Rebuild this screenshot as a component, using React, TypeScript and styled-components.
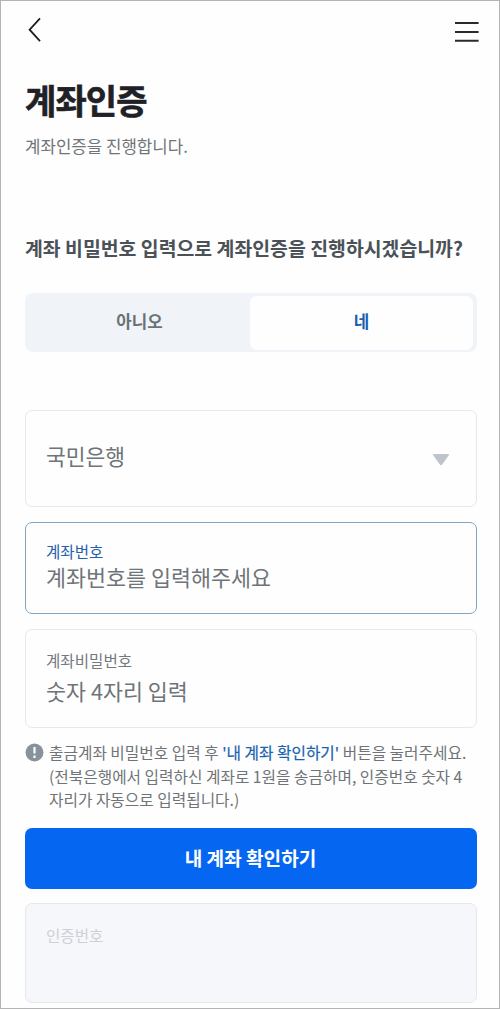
import React from 'react';
import styled, { createGlobalStyle } from 'styled-components';

const GlobalStyle = createGlobalStyle`
  *, *::before, *::after { box-sizing: border-box; }
  body {
    margin: 0;
    background: #fff;
    font-family: "Noto Sans CJK KR", "Noto Sans", sans-serif;
  }
  button { font-family: inherit; }
`;

const Page = styled.main`
  width: 500px;
  height: 1009px;
  padding: 0 22px 0 24px;
  border: 1px solid #b4b4b4;
  background: #fefefe;
  overflow: hidden;
`;

const TopBar = styled.header`
  display: flex;
  justify-content: space-between;
  align-items: flex-start;
  height: 60px;
  padding: 15px 0 0;
`;

const IconButton = styled.button<{ $shift?: number }>`
  display: flex;
  padding: 0;
  margin-right: ${({ $shift = 0 }) => $shift}px;
  border: 0;
  background: none;
`;

const Title = styled.h1`
  margin: 14px 0 0;
  font-size: 34px;
  font-weight: 700;
  line-height: 50px;
  letter-spacing: -0.9px;
  color: #1f2126;
  -webkit-text-stroke: 0.6px #1f2126;
`;

const Subtitle = styled.p`
  margin: 9px 0 0;
  font-size: 16.8px;
  line-height: 24px;
  color: #6f7478;
`;

const Question = styled.h2`
  margin: 75px 0 0;
  font-size: 19.4px;
  font-weight: 700;
  line-height: 30px;
  white-space: nowrap;
  color: #4b5257;
`;

const Segmented = styled.div`
  display: flex;
  height: 59px;
  margin-top: 30px;
  padding: 3px 4px 2px 0;
  border-radius: 8px;
  background: #f0f4f8;
`;

const Segment = styled.button<{ $active?: boolean }>`
  flex: ${({ $active }) => ($active ? '0 0 223px' : '1')};
  padding: ${({ $active }) => ($active ? '0 0 4px' : '0 0 4px 4px')};
  border: 0;
  border-radius: 7px;
  background: ${({ $active }) => ($active ? '#fefefe' : 'transparent')};
  color: ${({ $active }) => ($active ? '#1a5fb4' : '#6b7176')};
  font-size: 16.8px;
  font-weight: 700;
`;

const Field = styled.div<{ $height: number; $top?: number; $tone?: 'focus' | 'disabled' }>`
  display: flex;
  flex-direction: column;
  height: ${({ $height }) => $height}px;
  margin-top: ${({ $tone }) => ($tone === 'disabled' ? 14 : 15)}px;
  padding: ${({ $top = 0 }) => $top}px 20px 0;
  border: 1px solid ${({ $tone }) => ($tone === 'focus' ? '#7fa5c4' : '#e6e8eb')};
  border-radius: 7px;
  background: ${({ $tone }) => ($tone === 'disabled' ? '#f5f7fb' : '#fefefe')};
`;

const SelectField = styled(Field)`
  flex-direction: row;
  justify-content: space-between;
  align-items: flex-start;
  margin-top: 58px;
  padding-right: 26px;
`;

const Label = styled.span<{ $color?: string }>`
  font-size: 15.6px;
  line-height: 22px;
  color: ${({ $color = '#74797d' }) => $color};
`;

const Value = styled.span<{ $gap?: number; $size?: number }>`
  margin-top: ${({ $gap = 0 }) => $gap}px;
  font-size: ${({ $size = 21.75 }) => $size}px;
  line-height: 30px;
  color: #6f7478;
`;

const Caret = styled.svg`
  margin-top: 13px;
`;

const Note = styled.div`
  display: flex;
  gap: 5px;
  height: 72px;
  margin-top: 13px;
`;

const NoteIcon = styled.svg`
  flex: none;
  margin-top: 2px;
`;

const NoteText = styled.p`
  margin: 0;
  font-size: 15.73px;
  line-height: 23.7px;
  white-space: nowrap;
  color: #6f7478;
`;

const Highlight = styled.span`
  color: #1a62b0;
  -webkit-text-stroke: 0.2px #1a62b0;
`;

const Submit = styled.button`
  display: block;
  width: 100%;
  height: 61px;
  margin-top: 15px;
  padding: 0 1px 2px 0;
  border: 0;
  border-radius: 7px;
  background: #0566f2;
  color: #fff;
  font-size: 19.1px;
  font-weight: 700;
`;

export default function App() {
  return (
    <>
      <GlobalStyle />
      <Page>
        <TopBar>
          <IconButton aria-label="뒤로">
            <svg width="20" height="28" viewBox="0 0 20 28" fill="none" stroke="#1d1d1f" strokeWidth="1.8">
              <path d="M15 2.4 4.6 13.7 15 25.2" />
            </svg>
          </IconButton>
          <IconButton aria-label="메뉴" $shift={-2}>
            <svg width="24" height="28" viewBox="0 0 24 28" stroke="#2a2a2d" strokeWidth="2">
              <path d="M0 7.1h23.6M0 16h23.6M0 24.8h23.6" />
            </svg>
          </IconButton>
        </TopBar>
        <Title>계좌인증</Title>
        <Subtitle>계좌인증을 진행합니다.</Subtitle>
        <Question>계좌 비밀번호 입력으로 계좌인증을 진행하시겠습니까?</Question>
        <Segmented>
          <Segment>아니오</Segment>
          <Segment $active>네</Segment>
        </Segmented>
        <SelectField $height={97} $top={30}>
          <Value $size={21.5}>국민은행</Value>
          <Caret width="18" height="12" viewBox="0 0 18 12" fill="#bfc3cb">
            <path d="M1.8 0h14.4q1.6 0 .6 1.3l-6.6 9.2q-1.2 1.5-2.4 0L1.2 1.3Q.2 0 1.8 0Z" />
          </Caret>
        </SelectField>
        <Field $height={92} $top={17} $tone="focus">
          <Label $color="#2461ad">계좌번호</Label>
          <Value>계좌번호를 입력해주세요</Value>
        </Field>
        <Field $height={99} $top={19}>
          <Label>계좌비밀번호</Label>
          <Value $gap={5}>숫자 4자리 입력</Value>
        </Field>
        <Note>
          <NoteIcon width="19" height="19" viewBox="0 0 19 19">
            <circle cx="9.5" cy="9.5" r="9" fill="#87929d" />
            <path d="M9.5 4v6.4M9.5 12.6v2.4" stroke="#fff" strokeWidth="2.2" />
          </NoteIcon>
          <NoteText>
            출금계좌 비밀번호 입력 후 <Highlight>'내 계좌 확인하기'</Highlight> 버튼을 눌러주세요.
            <br />
            (전북은행에서 입력하신 계좌로 1원을 송금하며, 인증번호 숫자 4
            <br />
            자리가 자동으로 입력됩니다.)
          </NoteText>
        </Note>
        <Submit>내 계좌 확인하기</Submit>
        <Field $height={100} $top={20} $tone="disabled">
          <Label $color="#cdd0d6">인증번호</Label>
        </Field>
      </Page>
    </>
  );
}
